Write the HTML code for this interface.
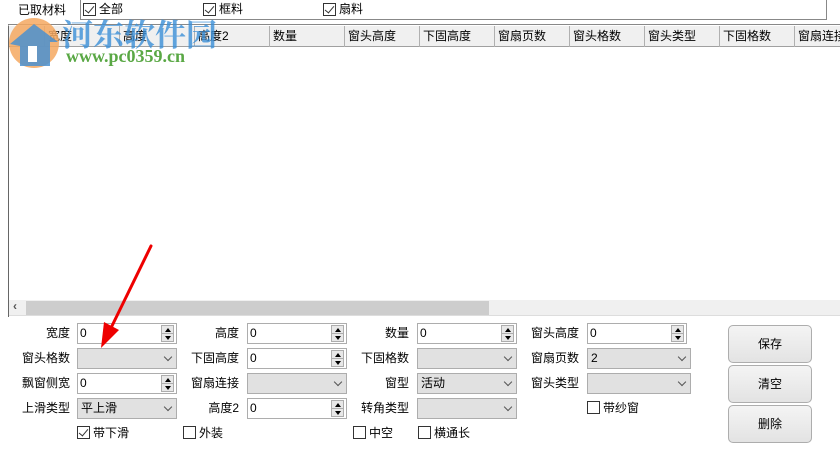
<!DOCTYPE html>
<html><head><meta charset="utf-8"><style>
*{margin:0;padding:0;box-sizing:border-box}
body{width:840px;height:462px;background:#fff;position:relative;overflow:hidden;font-family:"Liberation Sans","Noto Sans CJK SC",sans-serif;font-size:12px;color:#000}
.a{position:absolute;white-space:nowrap}
.cb{position:absolute;width:13px;height:13px;border:1px solid #333;background:#fff}
.cb.c::after{content:"";position:absolute;left:3px;top:0px;width:4px;height:8px;border:solid #333;border-width:0 1.5px 1.5px 0;transform:rotate(40deg)}
.lbl{position:absolute;text-align:right;width:70px;line-height:20px}
.sp{position:absolute;width:100px;height:21px;border:1px solid #adadad;background:#fff;padding-left:2px;line-height:19px}
.sp .b{position:absolute;right:2px;top:1px;width:13px;height:17px;border:1px solid #adadad;background:#e8e8e8}
.sp .b::before{content:"";position:absolute;left:3px;top:2px;border:3px solid transparent;border-bottom:4px solid #000;border-top:0}
.sp .b::after{content:"";position:absolute;left:3px;top:10px;border:3px solid transparent;border-top:4px solid #000;border-bottom:0}
.sp .b i{position:absolute;left:0;right:0;top:7px;height:1px;background:#adadad}
.cm{position:absolute;width:100px;height:21px;border:1px solid #adadad;background:#e1e1e1;padding-left:3px;line-height:19px}
.cm::after{content:"";position:absolute;right:5px;top:5px;width:5px;height:5px;border:solid #555;border-width:0 1px 1px 0;transform:rotate(45deg)}
.btn{position:absolute;left:728px;width:84px;border:1px solid #adadad;border-radius:5px;background:linear-gradient(#f4f4f4,#e3e3e3);text-align:center}
.hd{position:absolute;top:26px;height:21px;line-height:20px;border-left:1px solid #b0b0b0;padding-left:3px;width:75px}
</style></head><body>
<div class="a" style="left:18px;top:2px;line-height:16px">已取材料</div>
<div class="a" style="left:80px;top:0;width:747px;height:20px;border:1px solid #888;border-top:none;background:#fff"></div>
<div class="cb c" style="left:83px;top:3px"></div><div class="a" style="left:99px;top:1px;line-height:16px">全部</div>
<div class="cb c" style="left:203px;top:3px"></div><div class="a" style="left:219px;top:1px;line-height:16px">框料</div>
<div class="cb c" style="left:323px;top:3px"></div><div class="a" style="left:339px;top:1px;line-height:16px">扇料</div>
<div class="a" style="left:8px;top:24px;width:832px;height:293px;border-left:1px solid #666;border-top:3px double #888;background:#fff"></div>
<div class="a" style="left:9px;top:26px;width:831px;height:21px;background:#f0f0f0;border-bottom:1px solid #a0a0a0"></div>
<div class="hd" style="left:44px">宽度</div><div class="hd" style="left:119px">高度</div><div class="hd" style="left:194px">高度2</div><div class="hd" style="left:269px">数量</div><div class="hd" style="left:344px">窗头高度</div><div class="hd" style="left:419px">下固高度</div><div class="hd" style="left:494px">窗扇页数</div><div class="hd" style="left:569px">窗头格数</div><div class="hd" style="left:644px">窗头类型</div><div class="hd" style="left:719px">下固格数</div><div class="hd" style="left:794px">窗扇连接</div>
<div class="a" style="left:9px;top:300px;width:831px;height:16px;background:#f0f0f0;border-bottom:1px solid #ddd"></div>
<div class="a" style="left:26px;top:301px;width:463px;height:14px;background:#cdcdcd"></div>
<div class="a" style="left:13px;top:299px;font-size:12px;font-weight:bold;color:#555">&lsaquo;</div>
<svg class="a" style="left:4px;top:16px" width="62" height="54"><circle cx="30" cy="27" r="25" fill="#f4a860" opacity=".85"/><path d="M6 28 L30 8 L54 26 L46 26 L46 50 L16 50 L16 30Z" fill="#4a90d0" opacity=".85"/><rect x="24" y="30" width="9" height="16" fill="#fff"/></svg>
<div class="a" style="left:62px;top:10px;font-size:31px;font-weight:bold;color:#3a8fd8;opacity:.8;font-family:'Noto Serif CJK SC',serif">河东软件园</div>
<div class="a" style="left:66px;top:46px;font-size:18px;font-weight:bold;color:#5aa845;font-family:'Liberation Serif',serif">www.pc0359.cn</div>
<div class="lbl" style="left:0;top:323px">宽度</div><div class="sp" style="left:77px;top:323px">0<div class="b"><i></i></div></div>
<div class="lbl" style="left:169px;top:323px">高度</div><div class="sp" style="left:247px;top:323px">0<div class="b"><i></i></div></div>
<div class="lbl" style="left:339px;top:323px">数量</div><div class="sp" style="left:417px;top:323px">0<div class="b"><i></i></div></div>
<div class="lbl" style="left:509px;top:323px">窗头高度</div><div class="sp" style="left:587px;top:323px">0<div class="b"><i></i></div></div>
<div class="lbl" style="left:0;top:348px">窗头格数</div><div class="cm" style="left:77px;top:348px"></div>
<div class="lbl" style="left:169px;top:348px">下固高度</div><div class="sp" style="left:247px;top:348px">0<div class="b"><i></i></div></div>
<div class="lbl" style="left:339px;top:348px">下固格数</div><div class="cm" style="left:417px;top:348px"></div>
<div class="lbl" style="left:509px;top:348px">窗扇页数</div><div class="cm" style="left:587px;top:348px;width:104px">2</div>
<div class="lbl" style="left:0;top:373px">飘窗侧宽</div><div class="sp" style="left:77px;top:373px">0<div class="b"><i></i></div></div>
<div class="lbl" style="left:169px;top:373px">窗扇连接</div><div class="cm" style="left:247px;top:373px"></div>
<div class="lbl" style="left:339px;top:373px">窗型</div><div class="cm" style="left:417px;top:373px">活动</div>
<div class="lbl" style="left:509px;top:373px">窗头类型</div><div class="cm" style="left:587px;top:373px;width:104px"></div>
<div class="lbl" style="left:0;top:398px">上滑类型</div><div class="cm" style="left:77px;top:398px">平上滑</div>
<div class="lbl" style="left:169px;top:398px">高度2</div><div class="sp" style="left:247px;top:398px">0<div class="b"><i></i></div></div>
<div class="lbl" style="left:339px;top:398px">转角类型</div><div class="cm" style="left:417px;top:398px"></div>
<div class="cb" style="left:587px;top:401px"></div><div class="a" style="left:603px;top:399px">带纱窗</div>
<div class="cb c" style="left:77px;top:426px"></div><div class="a" style="left:93px;top:424px">带下滑</div>
<div class="cb" style="left:183px;top:426px"></div><div class="a" style="left:199px;top:424px">外装</div>
<div class="cb" style="left:353px;top:426px"></div><div class="a" style="left:369px;top:424px">中空</div>
<div class="cb" style="left:418px;top:426px"></div><div class="a" style="left:434px;top:424px">横通长</div>
<div class="btn" style="top:325px;height:38px;line-height:36px">保存</div>
<div class="btn" style="top:365px;height:38px;line-height:36px">清空</div>
<div class="btn" style="top:405px;height:38px;line-height:36px">删除</div>
<svg class="a" style="left:0;top:0" width="840" height="462"><line x1="151" y1="246" x2="110" y2="330" stroke="#e00" stroke-width="3" stroke-linecap="round"/><path d="M101 348 L104 322 L119 330Z" fill="#e00"/></svg>
</body></html>
